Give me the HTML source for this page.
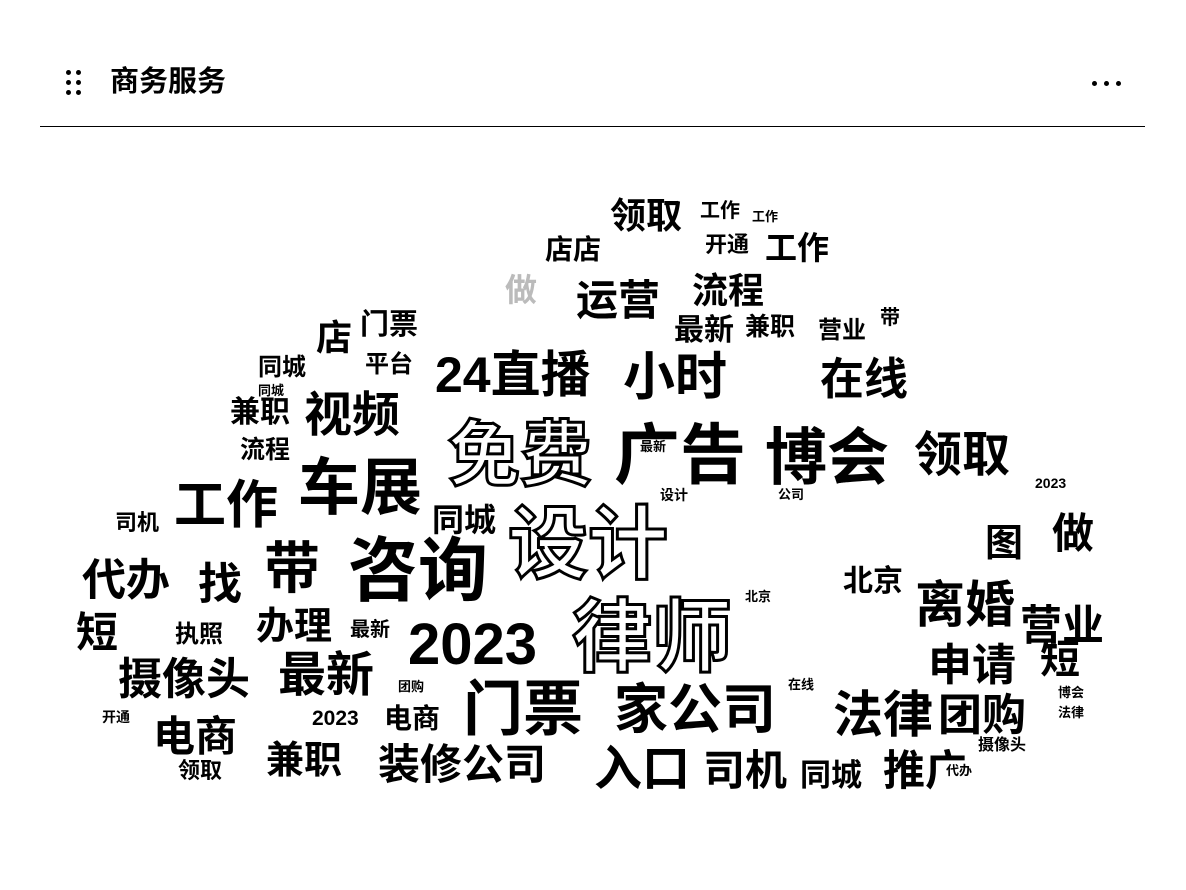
<!DOCTYPE html>
<html><head><meta charset="utf-8"><style>
body{margin:0;width:1186px;height:890px;background:#fff;position:relative;overflow:hidden;font-family:"Liberation Sans","Noto Sans CJK SC",sans-serif;color:#000}
.w{position:absolute;line-height:1;white-space:nowrap;font-family:"Liberation Sans","Noto Sans CJK SC",sans-serif;font-weight:bold}
.o{color:#fff;-webkit-text-stroke:3px #000}
.g{color:#bbb}
.d{position:absolute;width:5px;height:5px;background:#000;border-radius:50%}
</style></head><body>
<div class="d" style="left:66px;top:70px"></div><div class="d" style="left:76px;top:70px"></div>
<div class="d" style="left:66px;top:80px"></div><div class="d" style="left:76px;top:80px"></div>
<div class="d" style="left:66px;top:90px"></div><div class="d" style="left:76px;top:90px"></div>
<div class="w" style="left:110px;top:68px;font-size:29px">商务服务</div>
<div class="d" style="left:1092px;top:81px"></div><div class="d" style="left:1104px;top:81px"></div><div class="d" style="left:1116px;top:81px"></div>
<div style="position:absolute;left:40px;top:126px;width:1105px;height:1px;background:#000"></div>

<div class="w" style="left:700px;top:201px;font-size:20px">工作</div>
<div class="w" style="left:752px;top:210px;font-size:13px">工作</div>
<div class="w" style="left:545px;top:236px;font-size:28px">店店</div>
<div class="w" style="left:610px;top:198px;font-size:36px">领取</div>
<div class="w" style="left:705px;top:234px;font-size:22px">开通</div>
<div class="w" style="left:765px;top:232px;font-size:32px">工作</div>
<div class="w g" style="left:505px;top:274px;font-size:32px">做</div>
<div class="w" style="left:576px;top:280px;font-size:42px">运营</div>
<div class="w" style="left:692px;top:273px;font-size:36px">流程</div>
<div class="w" style="left:674px;top:316px;font-size:30px">最新</div>
<div class="w" style="left:745px;top:315px;font-size:25px">兼职</div>
<div class="w" style="left:818px;top:319px;font-size:24px">营业</div>
<div class="w" style="left:880px;top:308px;font-size:20px">带</div>
<div class="w" style="left:316px;top:320px;font-size:36px">店</div>
<div class="w" style="left:360px;top:311px;font-size:29px">门票</div>
<div class="w" style="left:258px;top:356px;font-size:24px">同城</div>
<div class="w" style="left:365px;top:353px;font-size:24px">平台</div>
<div class="w" style="left:435px;top:350px;font-size:50px">24直播</div>
<div class="w" style="left:623px;top:352px;font-size:52px">小时</div>
<div class="w" style="left:820px;top:358px;font-size:44px">在线</div>
<div class="w" style="left:304px;top:392px;font-size:48px">视频</div>
<div class="w" style="left:230px;top:398px;font-size:30px">兼职</div>
<div class="w" style="left:240px;top:438px;font-size:25px">流程</div>
<div class="w o" style="left:448px;top:420px;font-size:72px">免费</div>
<div class="w" style="left:614px;top:422px;font-size:66px">广告</div>
<div class="w" style="left:765px;top:428px;font-size:62px">博会</div>
<div class="w" style="left:914px;top:432px;font-size:48px">领取</div>
<div class="w" style="left:298px;top:458px;font-size:62px">车展</div>
<div class="w" style="left:174px;top:480px;font-size:52px">工作</div>
<div class="w" style="left:432px;top:504px;font-size:32px">同城</div>
<div class="w o" style="left:508px;top:505px;font-size:80px">设计</div>
<div class="w" style="left:660px;top:488px;font-size:14px">设计</div>
<div class="w" style="left:985px;top:525px;font-size:38px">图</div>
<div class="w" style="left:1052px;top:513px;font-size:42px">做</div>
<div class="w" style="left:115px;top:512px;font-size:22px">司机</div>
<div class="w" style="left:264px;top:541px;font-size:56px">带</div>
<div class="w" style="left:348px;top:536px;font-size:70px">咨询</div>
<div class="w" style="left:82px;top:559px;font-size:44px">代办</div>
<div class="w" style="left:198px;top:563px;font-size:44px">找</div>
<div class="w" style="left:843px;top:567px;font-size:30px">北京</div>
<div class="w" style="left:915px;top:580px;font-size:50px">离婚</div>
<div class="w" style="left:1020px;top:605px;font-size:42px">营业</div>
<div class="w" style="left:1035px;top:476px;font-size:14px">2023</div>
<div class="w" style="left:408px;top:616px;font-size:58px">2023</div>
<div class="w o" style="left:572px;top:598px;font-size:80px">律师</div>
<div class="w" style="left:76px;top:612px;font-size:42px">短</div>
<div class="w" style="left:256px;top:608px;font-size:38px">办理</div>
<div class="w" style="left:175px;top:623px;font-size:24px">执照</div>
<div class="w" style="left:350px;top:620px;font-size:20px">最新</div>
<div class="w" style="left:928px;top:644px;font-size:44px">申请</div>
<div class="w" style="left:1040px;top:640px;font-size:40px">短</div>
<div class="w" style="left:118px;top:658px;font-size:44px">摄像头</div>
<div class="w" style="left:278px;top:652px;font-size:48px">最新</div>
<div class="w" style="left:463px;top:680px;font-size:60px">门票</div>
<div class="w" style="left:614px;top:683px;font-size:54px">家公司</div>
<div class="w" style="left:833px;top:690px;font-size:50px">法律</div>
<div class="w" style="left:938px;top:694px;font-size:44px">团购</div>
<div class="w" style="left:153px;top:716px;font-size:42px">电商</div>
<div class="w" style="left:312px;top:708px;font-size:21px">2023</div>
<div class="w" style="left:384px;top:705px;font-size:28px">电商</div>
<div class="w" style="left:266px;top:742px;font-size:38px">兼职</div>
<div class="w" style="left:378px;top:744px;font-size:42px">装修公司</div>
<div class="w" style="left:594px;top:746px;font-size:48px">入口</div>
<div class="w" style="left:703px;top:750px;font-size:42px">司机</div>
<div class="w" style="left:800px;top:760px;font-size:31px">同城</div>
<div class="w" style="left:883px;top:750px;font-size:42px">推广</div>
<div class="w" style="left:178px;top:760px;font-size:22px">领取</div>
<div class="w" style="left:102px;top:710px;font-size:14px">开通</div>
<div class="w" style="left:978px;top:738px;font-size:16px">摄像头</div>
<div class="w" style="left:946px;top:764px;font-size:13px">代办</div>
<div class="w" style="left:1058px;top:686px;font-size:13px">博会</div>
<div class="w" style="left:1058px;top:706px;font-size:13px">法律</div>
<div class="w" style="left:788px;top:678px;font-size:13px">在线</div>
<div class="w" style="left:745px;top:590px;font-size:13px">北京</div>
<div class="w" style="left:778px;top:488px;font-size:13px">公司</div>
<div class="w" style="left:640px;top:440px;font-size:13px">最新</div>
<div class="w" style="left:398px;top:680px;font-size:13px">团购</div>
<div class="w" style="left:258px;top:384px;font-size:13px">同城</div>
</body></html>
